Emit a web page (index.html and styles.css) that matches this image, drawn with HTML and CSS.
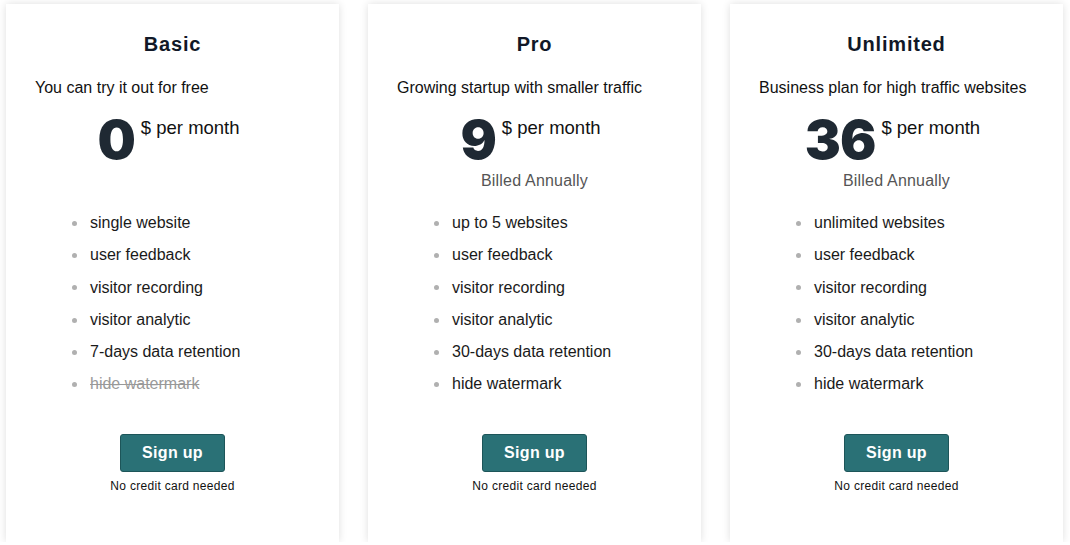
FILE: index.html
```html
<!DOCTYPE html>
<html>
<head>
<meta charset="utf-8">
<link rel="stylesheet" href="styles.css">
</head>
<body>
<div class="plans">
  <div class="card">
    <h2 class="title">Basic</h2>
    <p class="desc">You can try it out for free</p>
    <div class="price"><span class="num">0</span><span class="per">$ per month</span></div>
    <div class="billed hidden">Billed Annually</div>
    <ul class="features">
      <li>single website</li>
      <li>user feedback</li>
      <li>visitor recording</li>
      <li>visitor analytic</li>
      <li>7-days data retention</li>
      <li class="off">hide watermark</li>
    </ul>
    <div class="cta">
      <button class="btn">Sign up</button>
      <div class="note">No credit card needed</div>
    </div>
  </div>
  <div class="card">
    <h2 class="title">Pro</h2>
    <p class="desc">Growing startup with smaller traffic</p>
    <div class="price"><span class="num">9</span><span class="per">$ per month</span></div>
    <div class="billed">Billed Annually</div>
    <ul class="features">
      <li>up to 5 websites</li>
      <li>user feedback</li>
      <li>visitor recording</li>
      <li>visitor analytic</li>
      <li>30-days data retention</li>
      <li>hide watermark</li>
    </ul>
    <div class="cta">
      <button class="btn">Sign up</button>
      <div class="note">No credit card needed</div>
    </div>
  </div>
  <div class="card">
    <h2 class="title">Unlimited</h2>
    <p class="desc">Business plan for high traffic websites</p>
    <div class="price"><span class="num">36</span><span class="per">$ per month</span></div>
    <div class="billed">Billed Annually</div>
    <ul class="features">
      <li>unlimited websites</li>
      <li>user feedback</li>
      <li>visitor recording</li>
      <li>visitor analytic</li>
      <li>30-days data retention</li>
      <li>hide watermark</li>
    </ul>
    <div class="cta">
      <button class="btn">Sign up</button>
      <div class="note">No credit card needed</div>
    </div>
  </div>
</div>
</body>
</html>
```

FILE: styles.css
```css
html, body {
  margin: 0;
  background: #ffffff;
}
body {
  font-family: "Liberation Sans", Arial, sans-serif;
  color: #1a1a1a;
}
.plans {
  display: grid;
  grid-template-columns: repeat(3, 333px);
  column-gap: 29px;
  padding: 4px 7px 0 6px;
}
.card {
  background: #fff;
  box-shadow: 0 0 8px rgba(0, 0, 0, 0.13);
  padding: 28px 29px 49px;
  display: flex;
  flex-direction: column;
}
.title {
  margin: 0;
  text-align: center;
  font-size: 20px;
  line-height: 24px;
  font-weight: 700;
  letter-spacing: 0.8px;
  color: #111827;
}
.desc {
  margin: 23px 0 0;
  font-size: 16px;
  line-height: 18px;
  color: #111;
}
.price {
  margin-top: 15px;
  display: flex;
  justify-content: center;
  align-items: flex-start;
  padding-right: 8px;
}
.num {
  font-family: Inter, "Liberation Sans", sans-serif;
  font-weight: 900;
  font-size: 54px;
  line-height: 55px;
  color: #1f2933;
  letter-spacing: -1px;
}
.per {
  margin-left: 6px;
  margin-top: 5px;
  font-size: 18.5px;
  line-height: 21px;
  color: #111;
}
.billed {
  margin-top: 5px;
  text-align: center;
  font-size: 16px;
  line-height: 18px;
  letter-spacing: 0.2px;
  color: #555;
}
.billed.hidden {
  visibility: hidden;
}
.features {
  list-style: none;
  margin: 17px 0 0;
  padding: 0 0 0 55px;
}
.features li {
  display: flex;
  align-items: center;
  font-size: 16px;
  line-height: 18.3px;
  padding: 7px 0;
  color: #1a1a1a;
}
.features li::before {
  content: "";
  width: 5px;
  height: 5px;
  border-radius: 50%;
  background: #b0b0b0;
  margin-left: -18px;
  margin-right: 13px;
  flex: none;
}
.features li.off {
  color: #999;
  text-decoration: line-through;
}
.cta {
  margin-top: 33px;
  display: flex;
  flex-direction: column;
  align-items: center;
}
.btn {
  height: 38px;
  padding: 0 21px;
  background: #2a7176;
  border: 1px solid #1d5559;
  border-radius: 3px;
  color: #fff;
  font-family: "Liberation Sans", Arial, sans-serif;
  font-weight: 700;
  font-size: 16px;
  letter-spacing: 0.3px;
  cursor: pointer;
}
.note {
  margin-top: 7px;
  font-size: 12px;
  line-height: 14px;
  letter-spacing: 0.3px;
  color: #111;
}
```
